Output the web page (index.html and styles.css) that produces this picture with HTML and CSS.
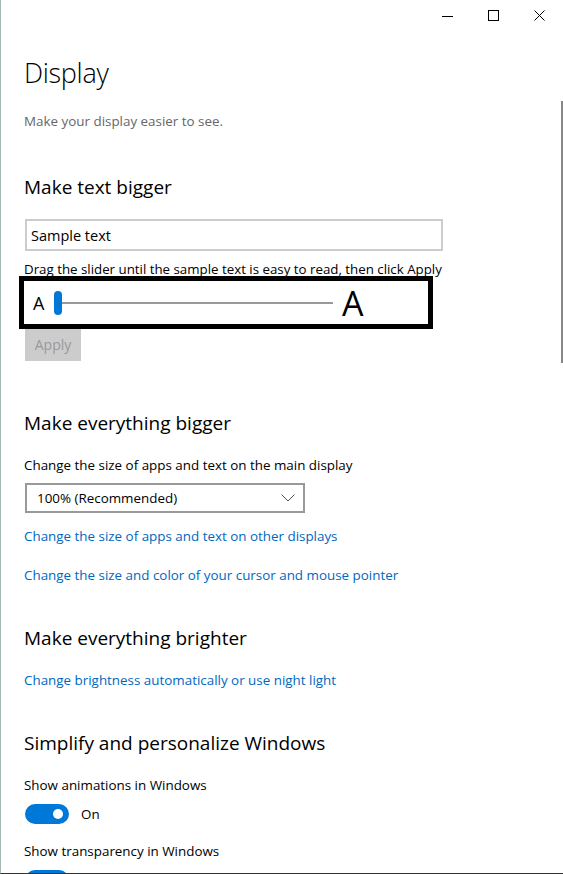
FILE: index.html
```html
<html>
	<head>
		<link rel="stylesheet" href="styles.css">
	</head>
	<body>
		<div class="window">
			<div class="titlebar">
				<div class="capBtn">
					<svg width="12" height="12" viewBox="0 0 12 12"><path d="M0 6.5H11" stroke="#000" stroke-width="1"/></svg>
				</div>
				<div class="capBtn">
					<svg width="12" height="12" viewBox="0 0 12 12"><rect x="0.5" y="0.5" width="10" height="10" fill="none" stroke="#000" stroke-width="1"/></svg>
				</div>
				<div class="capBtn">
					<svg width="12" height="12" viewBox="0 0 12 12"><path d="M0.5 0.5L10.5 10.5M10.5 0.5L0.5 10.5" stroke="#000" stroke-width="1"/></svg>
				</div>
			</div>
			<div class="scrollThumb"></div>
			<div class="content">
				<h1 class="pageTitle">Display</h1>
				<p class="subtitle">Make your display easier to see.</p>

				<h2 class="section first">Make text bigger</h2>
				<div class="sampleBox">Sample text</div>
				<p class="hint">Drag the slider until the sample text is easy to read, then click Apply</p>
				<div class="sliderBox">
					<span class="smallA">A</span>
					<div class="slider">
						<div class="thumb"></div>
						<div class="track"></div>
					</div>
					<span class="bigA">A</span>
				</div>
				<div class="applyBtn">Apply</div>

				<h2 class="section">Make everything bigger</h2>
				<p class="label">Change the size of apps and text on the main display</p>
				<div class="dropdown">
					<span>100% (Recommended)</span>
					<svg width="14" height="8" viewBox="0 0 14 8"><path d="M0.5 0.5L7 7L13.5 0.5" fill="none" stroke="#555" stroke-width="1"/></svg>
				</div>
				<p class="link link1">Change the size of apps and text on other displays</p>
				<p class="link link2">Change the size and color of your cursor and mouse pointer</p>

				<h2 class="section mid">Make everything brighter</h2>
				<p class="link link3">Change brightness automatically or use night light</p>

				<h2 class="section mid">Simplify and personalize Windows</h2>
				<p class="label">Show animations in Windows</p>
				<div class="toggleRow">
					<div class="toggle"><div class="knob"></div></div>
					<span class="toggleText">On</span>
				</div>
				<p class="label label2">Show transparency in Windows</p>
				<div class="toggleRow">
					<div class="toggle"><div class="knob"></div></div>
				</div>
			</div>
		</div>
	</body>
</html>
```

FILE: styles.css
```css
body {
	margin: 0;
	background: #fff;
	font-family: "Open Sans", "Noto Sans", sans-serif;
	color: #000;
}
.window {
	position: relative;
	width: 563px;
	height: 874px;
	box-sizing: border-box;
	border-left: 1px solid #a8bab6;
	border-bottom: 1px solid #333;
	overflow: hidden;
	background: #fff;
}
.titlebar {
	height: 32px;
	display: flex;
	justify-content: flex-end;
}
.capBtn {
	width: 46px;
	height: 32px;
	display: flex;
	align-items: center;
	justify-content: center;
}
.scrollThumb {
	position: absolute;
	right: 0;
	top: 101px;
	width: 2px;
	height: 262px;
	background: #888;
}
.content {
	padding-left: 23px;
}
.content p, .content h1, .content h2 {
	margin: 0;
	font-weight: normal;
	white-space: nowrap;
}
.pageTitle {
	font-size: 27px;
	font-weight: 300 !important;
	line-height: 40px;
	margin-top: 21px !important;
	letter-spacing: -0.3px;
}
.subtitle {
	font-size: 13.4px;
	line-height: 20px;
	color: #666;
	margin-top: 18px !important;
}
.section {
	font-size: 19px;
	line-height: 28px;
	margin-top: 48px !important;
}
.section.first {
	margin-top: 42px !important;
}
.section.mid {
	margin-top: 39px !important;
}
.sampleBox {
	margin-top: 18px;
	margin-left: 1px;
	width: 418px;
	height: 32px;
	box-sizing: border-box;
	border: 2px solid #ccc;
	font-size: 14.5px;
	line-height: 29px;
	padding-left: 4px;
}
.hint {
	font-size: 13.3px;
	line-height: 14px;
	margin-top: 11px !important;
}
.sliderBox {
	margin-left: -5px;
	width: 414px;
	height: 53px;
	box-sizing: border-box;
	border: 5px solid #000;
	display: flex;
	align-items: center;
}
.smallA {
	font-size: 18px;
	margin-left: 9px;
	width: 21px;
}
.slider {
	display: flex;
	align-items: center;
	width: 279px;
}
.thumb {
	width: 8px;
	height: 24px;
	border-radius: 4px;
	background: #0078d7;
}
.track {
	flex: 1;
	height: 2px;
	background: #999;
}
.bigA {
	font-size: 34px;
	margin-left: 9px;
	line-height: 34px;
}
.applyBtn {
	margin-left: 1px;
	width: 56px;
	height: 32px;
	background: #ccc;
	color: #999;
	font-size: 14px;
	line-height: 32px;
	text-align: center;
}
.label {
	font-size: 13.4px;
	line-height: 20px;
	margin-top: 18px !important;
}
.label.label2 {
	margin-top: 17px !important;
}
.dropdown {
	margin-top: 8px;
	margin-left: 1px;
	width: 280px;
	height: 30px;
	box-sizing: border-box;
	border: 2px solid #999;
	display: flex;
	align-items: center;
	justify-content: space-between;
	padding: 0 8px 0 10px;
	font-size: 13.4px;
}
.link {
	font-size: 13.4px;
	line-height: 20px;
	color: #0067c0;
}
.link1 {
	margin-top: 13px !important;
}
.link2 {
	margin-top: 19px !important;
}
.link3 {
	margin-top: 18px !important;
}
.toggleRow {
	margin-top: 9px;
	margin-left: 1px;
	display: flex;
	align-items: center;
	height: 20px;
}
.toggle {
	width: 44px;
	height: 20px;
	border-radius: 10px;
	background: #0078d7;
	display: flex;
	align-items: center;
	justify-content: flex-end;
	padding-right: 6px;
	box-sizing: border-box;
}
.knob {
	width: 10px;
	height: 10px;
	border-radius: 5px;
	background: #fff;
}
.toggleText {
	font-size: 13.4px;
	margin-left: 12px;
}
```
